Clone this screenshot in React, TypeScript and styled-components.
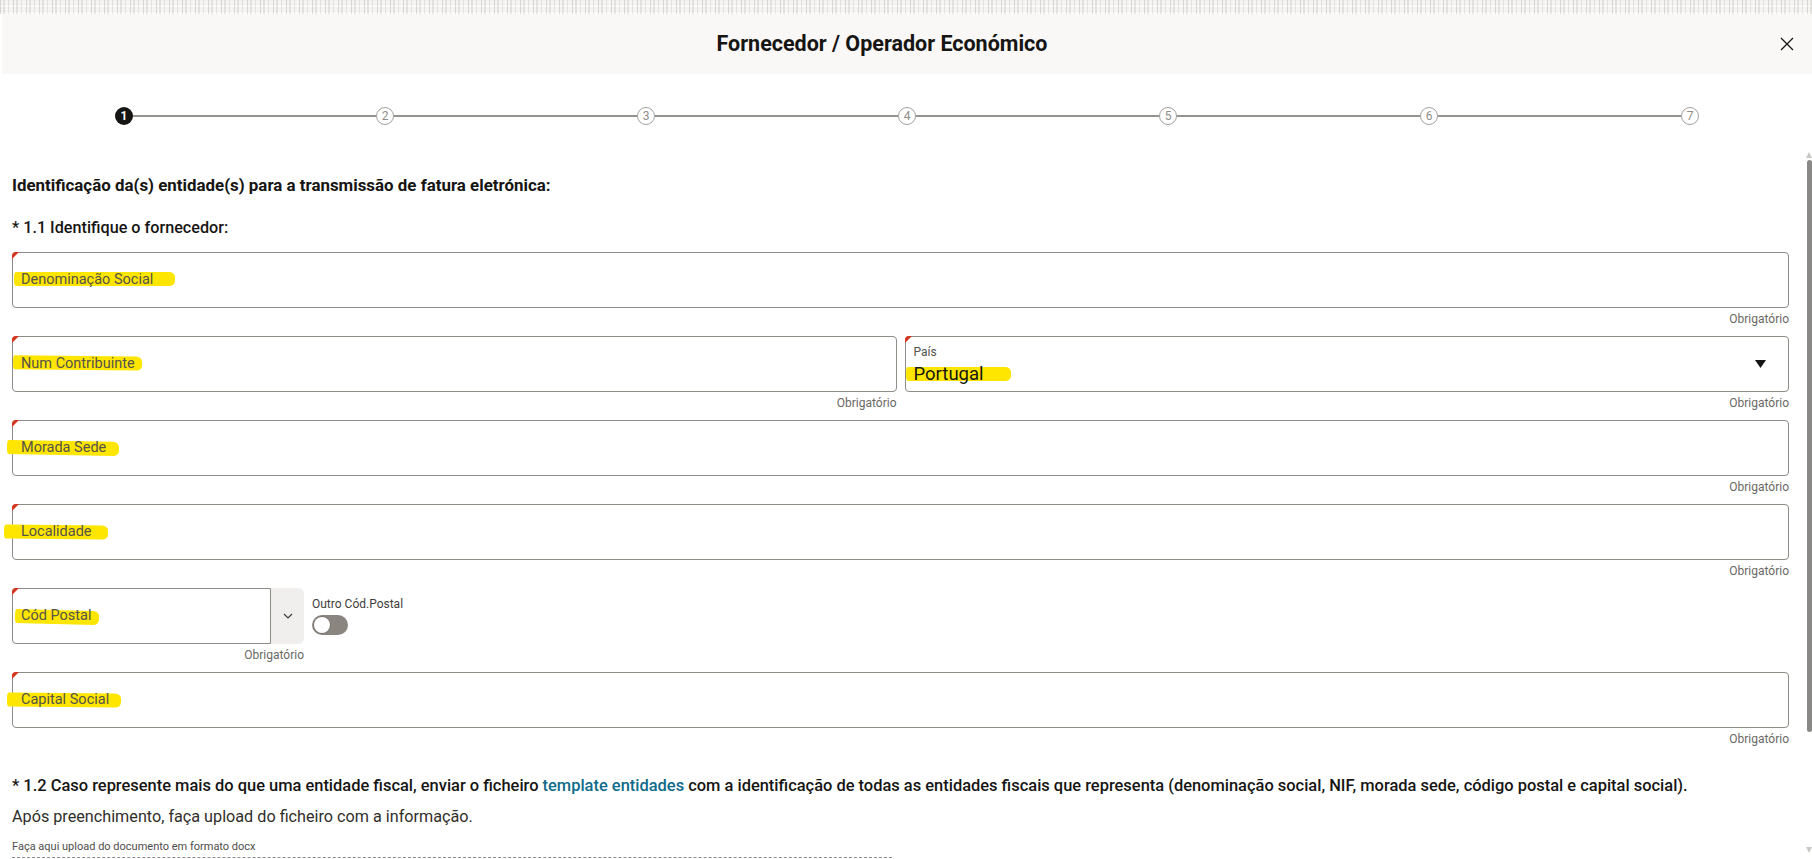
import React from "react";
import styled, { createGlobalStyle } from "styled-components";

interface TextField {
  id: string;
  label: string;
  hl: [number, number, number, number];
}

const GlobalStyle = createGlobalStyle`
  html, body {
    margin: 0;
    padding: 0;
    background: #fff;
  }
  body {
    font-family: Roboto, "Noto Sans", "Liberation Sans", sans-serif;
    color: #161513;
    overflow: hidden;
  }
  * {
    box-sizing: border-box;
  }
`;

const Page = styled.div`
  width: 1812px;
  height: 859px;
  overflow: hidden;
  display: flex;
  flex-direction: column;
`;

const Backdrop = styled.div`
  height: 14px;
  flex-shrink: 0;
  background-color: #f3f2f0;
  background-image: repeating-linear-gradient(90deg, rgba(160, 156, 150, 0.35) 0 1px, transparent 1px 3px, rgba(185, 181, 175, 0.3) 3px 5px, transparent 5px 8px, rgba(170, 166, 160, 0.25) 8px 9px, transparent 9px 13px),
    repeating-linear-gradient(0deg, rgba(255, 255, 255, 0.7) 0 2px, transparent 2px 4px, rgba(255, 255, 255, 0.4) 4px 5px, transparent 5px 7px);
`;

const Dialog = styled.div`
  flex: 1;
  min-height: 0;
  margin-left: 2px;
  display: flex;
  flex-direction: column;
  background: #fff;
`;

const Header = styled.header`
  height: 60px;
  flex-shrink: 0;
  background: #f9f8f7;
  display: flex;
  align-items: center;
`;

const Title = styled.h1`
  flex: 1;
  margin: 0;
  text-align: center;
  font-size: 21.5px;
  font-weight: 700;
  line-height: 24px;
  color: #161513;
`;

const CloseButton = styled.button`
  width: 50px;
  height: 60px;
  padding: 0;
  border: 0;
  background: transparent;
  display: flex;
  align-items: center;
  justify-content: center;
  color: #161513;
`;

const Body = styled.div`
  position: relative;
  flex: 1;
  min-height: 0;
`;

const Stepper = styled.div`
  display: flex;
  align-items: center;
  padding: 33px 113px 23px 113px;
`;

const StepDot = styled.span<{ $active?: boolean }>`
  width: 18px;
  height: 18px;
  flex-shrink: 0;
  border-radius: 50%;
  display: flex;
  align-items: center;
  justify-content: center;
  font-size: 12px;
  line-height: 1;
  ${(p) => (p.$active ? "background: #161513; color: #fff; font-weight: 700;" : "background: #fff; border: 1.5px solid #a3a19e; color: #8f8d8a;")}
`;

const Connector = styled.span`
  flex: 1;
  height: 2px;
  background: #959390;
`;

const Form = styled.form`
  padding: 27px 23px 0 10px;
`;

const SectionTitle = styled.h2`
  margin: 0 0 23px;
  font-size: 16.9px;
  font-weight: 700;
  line-height: 20px;
`;

const Question = styled.p`
  margin: 0 0 14px;
  font-size: 16.2px;
  font-weight: 500;
  line-height: 20px;
`;

const Field = styled.div`
  display: flex;
  flex-direction: column;
  min-width: 0;
`;

const InputBox = styled.div`
  position: relative;
  height: 56px;
  border: 1px solid #8f8c88;
  border-radius: 4px;
  display: flex;
  align-items: center;
  padding: 0 8px;
  background: #fff;

  &::before {
    content: "";
    position: absolute;
    top: -1px;
    left: -1px;
    border-top: 7px solid #d4361f;
    border-right: 7px solid transparent;
    border-top-left-radius: 4px;
  }
`;

const Helper = styled.div`
  height: 28px;
  padding-top: 3px;
  text-align: right;
  font-size: 12px;
  line-height: 16px;
  color: #6a6865;
`;

const Marker = styled.span<{ $l: number; $r: number; $tilt: number; $dy: number; $size: number; $ink: string }>`
  position: relative;
  z-index: 0;
  font-size: ${(p) => p.$size}px;
  line-height: 20px;
  color: ${(p) => p.$ink};

  &::before {
    content: "";
    position: absolute;
    z-index: -1;
    left: ${(p) => -p.$l}px;
    right: ${(p) => -p.$r}px;
    top: 50%;
    height: 14px;
    margin-top: ${(p) => p.$dy - 7}px;
    background: #ffe600;
    border-radius: 2px 6px 5px 2px / 5px;
    transform: rotate(${(p) => p.$tilt}deg);
  }
`;

const Pair = styled.div`
  display: grid;
  grid-template-columns: 1fr 1fr;
  gap: 8px;
`;

const SelectBox = styled(InputBox)`
  align-items: stretch;
  padding-right: 22px;
`;

const SelectValue = styled.div`
  flex: 1;
  display: flex;
  flex-direction: column;
  padding-top: 8px;
`;

const SelectLabel = styled.span`
  font-size: 12px;
  line-height: 14px;
  color: #55524d;
`;

const SelectText = styled.span`
  margin-top: 5px;
  line-height: 20px;
`;

const SelectArrow = styled.span`
  display: flex;
  align-items: center;
`;

const PostalRow = styled.div`
  display: flex;
  gap: 8px;
  align-items: flex-start;
`;

const PostalField = styled(Field)`
  width: 292px;
`;

const Combo = styled.div`
  display: flex;
  height: 56px;
`;

const ComboInput = styled(InputBox)`
  flex: 1;
  border-radius: 4px 0 0 4px;
`;

const ComboButton = styled.button`
  width: 33px;
  padding: 0;
  border: 0;
  background: #f1efed;
  border-radius: 0 6px 6px 0;
  display: flex;
  align-items: center;
  justify-content: center;
  color: #3f3d3a;
`;

const SwitchGroup = styled.div`
  display: flex;
  flex-direction: column;
  padding-top: 8px;
`;

const SwitchLabel = styled.span`
  font-size: 12px;
  line-height: 16px;
  color: #3f3d3a;
`;

const SwitchTrack = styled.span`
  margin-top: 3px;
  width: 36px;
  height: 20px;
  border-radius: 10px;
  background: #8b857f;
  display: flex;
  align-items: center;
  padding-left: 2px;
`;

const SwitchKnob = styled.span`
  width: 16px;
  height: 16px;
  border-radius: 50%;
  background: #fff;
  box-shadow: 0 0 0 1px rgba(0, 0, 0, 0.12);
`;

const Question2 = styled.p`
  margin: 20px 0 0;
  font-size: 16.45px;
  font-weight: 500;
  line-height: 20px;
`;

const TemplateLink = styled.a`
  color: #0f6b8a;
  text-decoration: none;
`;

const Note = styled.p`
  margin: 11px 0 0;
  font-size: 16.2px;
  line-height: 20px;
  color: #302e2b;
`;

const UploadLabel = styled.div`
  margin-top: 13px;
  font-size: 11px;
  line-height: 14px;
  color: #4f4d4a;
`;

const DropZone = styled.div`
  width: 880px;
  height: 40px;
  margin-top: 3px;
  border-top: 1px dashed #8f8c88;
`;

const ScrollTrack = styled.div`
  position: absolute;
  top: 78px;
  right: 0;
  bottom: 0;
  width: 6px;
  display: flex;
  flex-direction: column;
  align-items: center;
  color: #c9c7c4;
`;

const ScrollThumb = styled.div`
  margin-top: 2px;
  width: 5px;
  height: 572px;
  border-radius: 3px;
  background: #8a8886;
`;

const ScrollSpacer = styled.div`
  flex: 1;
`;

const ScrollArrow = styled.svg<{ $down?: boolean }>`
  display: block;
  margin-bottom: ${(p) => (p.$down ? "6px" : "0")};
  transform: ${(p) => (p.$down ? "rotate(180deg)" : "none")};
`;

const steps = [1, 2, 3, 4, 5, 6, 7];

const Highlighted = ({ label, hl, size = 14.5, ink = "#55524d" }: { label: string; hl: [number, number, number, number]; size?: number; ink?: string }) => (
  <Marker $l={hl[0]} $r={hl[1]} $tilt={hl[2]} $dy={hl[3]} $size={size} $ink={ink}>
    {label}
  </Marker>
);

const TextInputField = ({ field }: { field: TextField }) => (
  <Field>
    <InputBox>
      <Highlighted label={field.label} hl={field.hl} />
    </InputBox>
    <Helper>Obrigatório</Helper>
  </Field>
);

const App = () => {
  const denominacao: TextField = { id: "den", label: "Denominação Social", hl: [7, 22, 0, -1] };
  const contribuinte: TextField = { id: "nif", label: "Num Contribuinte", hl: [8, 7, 0.6, -1] };
  const morada: TextField = { id: "morada", label: "Morada Sede", hl: [14, 13, 1, 0] };
  const localidade: TextField = { id: "local", label: "Localidade", hl: [17, 16, 0.6, 0] };
  const capital: TextField = { id: "capital", label: "Capital Social", hl: [14, 12, 0.5, 0] };

  return (
    <Page>
      <GlobalStyle />
      <Backdrop />
      <Dialog>
        <Header>
          <Title>Fornecedor / Operador Económico</Title>
          <CloseButton type="button" aria-label="Fechar">
            <svg width="14" height="14" viewBox="0 0 14 14">
              <path d="M1 1L13 13M13 1L1 13" stroke="currentColor" strokeWidth="1.3" fill="none" />
            </svg>
          </CloseButton>
        </Header>
        <Body>
          <Stepper>
            {steps.map((s, i) => (
              <React.Fragment key={s}>
                {i > 0 && <Connector />}
                <StepDot $active={s === 1}>{s}</StepDot>
              </React.Fragment>
            ))}
          </Stepper>
          <Form>
            <SectionTitle>Identificação da(s) entidade(s) para a transmissão de fatura eletrónica:</SectionTitle>
            <Question>* 1.1 Identifique o fornecedor:</Question>

            <TextInputField field={denominacao} />

            <Pair>
              <TextInputField field={contribuinte} />
              <Field>
                <SelectBox>
                  <SelectValue>
                    <SelectLabel>País</SelectLabel>
                    <SelectText>
                      <Highlighted label="Portugal" hl={[8, 27, 0, 0]} size={18.5} ink="#161513" />
                    </SelectText>
                  </SelectValue>
                  <SelectArrow>
                    <svg width="11" height="8" viewBox="0 0 11 8">
                      <path d="M0 0H11L5.5 8Z" fill="#161513" />
                    </svg>
                  </SelectArrow>
                </SelectBox>
                <Helper>Obrigatório</Helper>
              </Field>
            </Pair>

            <TextInputField field={morada} />
            <TextInputField field={localidade} />

            <PostalRow>
              <PostalField>
                <Combo>
                  <ComboInput>
                    <Highlighted label="Cód Postal" hl={[6, 8, 1.5, 1]} />
                  </ComboInput>
                  <ComboButton type="button" aria-label="Abrir">
                    <svg width="10" height="6" viewBox="0 0 10 6">
                      <path d="M1 1L5 5L9 1" stroke="currentColor" strokeWidth="1.2" fill="none" />
                    </svg>
                  </ComboButton>
                </Combo>
                <Helper>Obrigatório</Helper>
              </PostalField>
              <SwitchGroup>
                <SwitchLabel>Outro Cód.Postal</SwitchLabel>
                <SwitchTrack>
                  <SwitchKnob />
                </SwitchTrack>
              </SwitchGroup>
            </PostalRow>

            <TextInputField field={capital} />

            <Question2>
              * 1.2 Caso represente mais do que uma entidade fiscal, enviar o ficheiro <TemplateLink href="#">template entidades</TemplateLink> com a
              identificação de todas as entidades fiscais que representa (denominação social, NIF, morada sede, código postal e capital social).
            </Question2>
            <Note>Após preenchimento, faça upload do ficheiro com a informação.</Note>
            <UploadLabel>Faça aqui upload do documento em formato docx</UploadLabel>
            <DropZone />
          </Form>
          <ScrollTrack>
            <ScrollArrow width="6" height="6" viewBox="0 0 6 6">
              <path d="M0 6L3 0L6 6Z" fill="currentColor" />
            </ScrollArrow>
            <ScrollThumb />
            <ScrollSpacer />
            <ScrollArrow $down width="6" height="6" viewBox="0 0 6 6">
              <path d="M0 6L3 0L6 6Z" fill="currentColor" />
            </ScrollArrow>
          </ScrollTrack>
        </Body>
      </Dialog>
    </Page>
  );
};

export default App;
